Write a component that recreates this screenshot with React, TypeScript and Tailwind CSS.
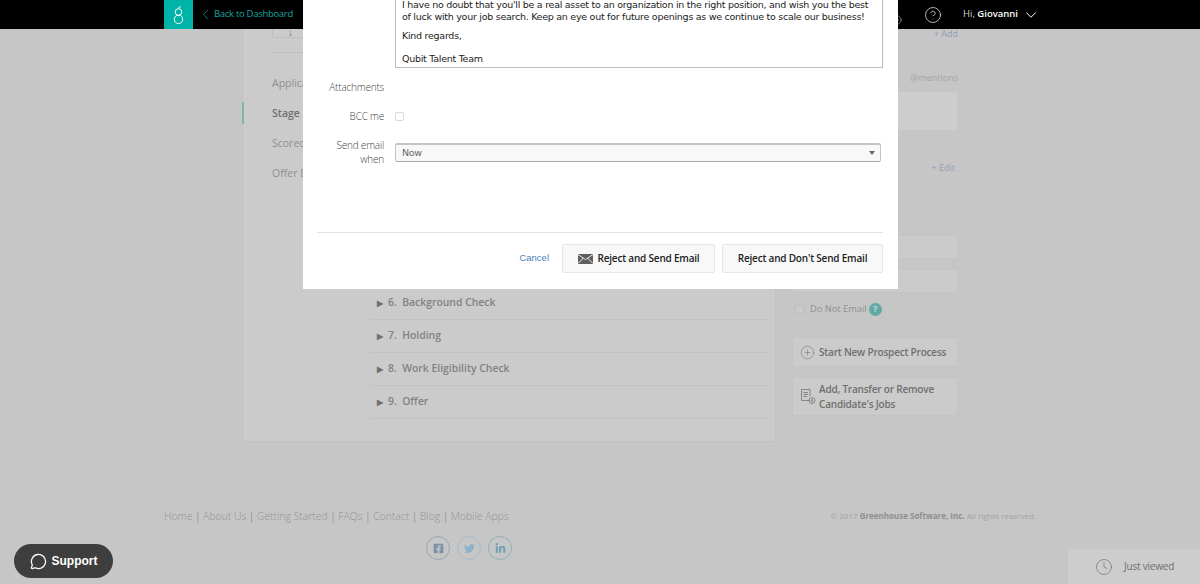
import { ChevronDown, ChevronLeft, CircleHelp, CirclePlus, Clock, MessageCircle } from "lucide-react";
import { FaFacebookSquare, FaLinkedinIn, FaTwitter } from "react-icons/fa";

const openSans = "font-['Open_Sans',sans-serif]";

const Logo = () => (
  <svg width="12" height="22" viewBox="0 0 12 22" fill="none" stroke="white" strokeWidth="1">
    <circle cx="5.5" cy="8" r="3.3" />
    <circle cx="5.5" cy="15.4" r="4.1" />
    <path d="M5.5 4.7 C5.5 3.4 6.3 2.8 7.8 2.8" />
  </svg>
);

const Envelope = () => (
  <svg width="15" height="10" viewBox="0 0 15 10">
    <rect width="15" height="10" fill="#5f5f5f" />
    <path d="M0 0.5 L7.5 5.5 L15 0.5 M0 9.5 L5.5 4 M15 9.5 L9.5 4" stroke="#f8f8f8" strokeWidth="0.9" fill="none" />
  </svg>
);

const JobsIcon = () => (
  <svg width="15" height="16" viewBox="0 0 15 16" fill="none" stroke="#757575" strokeWidth="0.8">
    <path d="M8.5 11.5 H0.5 V0.5 H9 V7" />
    <path d="M2.5 3.5 H7 M2.5 5.5 H7 M2.5 7.5 H6" />
    <circle cx="11" cy="11.5" r="3" />
    <circle cx="11" cy="11.5" r="1" />
  </svg>
);

const stages = ["6.  Background Check", "7.  Holding", "8.  Work Eligibility Check", "9.  Offer"];
const navItems = ["Application", "Stage", "Scorecards", "Offer Details"];
const footerLinks = ["Home", "About Us", "Getting Started", "FAQs", "Contact", "Blog", "Mobile Apps"];

const Header = () => (
  <header className="flex h-[29px] items-center bg-black pl-[164px] pr-[160px]">
    <div className="flex h-[29px] w-[29px] items-center justify-center bg-[#00b3a8]">
      <Logo />
    </div>
    <ChevronLeft className="ml-[4px] text-[#16a89e]" size={17} strokeWidth={1} />
    <span className="text-[9.5px] tracking-[-0.3px] text-[#14a79d]">Back to Dashboard</span>
    <div className="ml-auto flex items-center">
      <CirclePlus className="mt-[10px] text-[#d8d8d8]" size={10} strokeWidth={1.2} />
      <CircleHelp className="ml-[22px] text-[#e6e6e6]" size={18} strokeWidth={1} />
      <span className="ml-[21px] text-[9.5px] text-[#d8d8d8]">
        Hi, <span className="font-semibold text-white">Giovanni</span>
      </span>
      <ChevronDown className="ml-[4px] text-white" size={18} strokeWidth={1.3} />
    </div>
  </header>
);

const Card = () => (
  <section className="flex h-[413px] w-[534px] border-x border-b border-[#c2c2c2] bg-[#cbcbcb]">
    <div className="relative w-[127px] pl-[29px]">
      <div className="h-[9px] w-[60px] border-x border-b border-[#c0c0c0] pl-[15px] text-[10px] leading-[7px] text-[#777]">↓</div>
      <div className="mt-[14px] h-px w-[90px] bg-[#c0c0c0]" />
      <ul className="mt-[19px] flex flex-col gap-[8px] text-[10.5px] leading-[22px] text-[#8f8f8f]">
        {navItems.map((item) => (
          <li key={item} className={item === "Stage" ? "font-semibold text-[#6f6f6f]" : ""}>{item}</li>
        ))}
      </ul>
      <div className="absolute left-[-1px] top-[73px] h-[22px] w-[2px] bg-[#7fb5ae]" />
    </div>
    <ul className="mt-[258px] h-[132px] w-[398px] text-[10.4px] font-semibold text-[#828282]">
      {stages.map((stage) => (
        <li key={stage} className="flex h-[33px] items-center border-b border-[#c2c2c2] pl-[7px]">
          <span className="mr-[5px] text-[8px] text-[#6f6f6f]">▶</span>
          <span className="whitespace-pre">{stage}</span>
        </li>
      ))}
    </ul>
  </section>
);

const Sidebar = () => (
  <aside className="ml-[16px] flex w-[166px] flex-col text-[#9a9a9a]">
    <div className="mt-[-1px] h-[27px] border-b border-[#c2c2c2] text-right text-[9px] leading-[12px] text-[#8d9db5]">+ Add</div>
    <div className="mt-[16px] text-right text-[9px] leading-[14px] text-[#a4a4a4]">@mentions</div>
    <div className="mt-[7px] h-[38px] w-[165px] bg-[#cdcdcd]" />
    <div className="mt-[16px] h-[16px] border-t border-[#c2c2c2]" />
    <div className="pr-[3px] text-right text-[9px] leading-[12px] text-[#8d9db5]">+ Edit</div>
    <div className="mt-[21px] h-px bg-[#c2c2c2]" />
    <div className="mt-[39px] h-[24px] border border-[#c4c4c4] bg-[#cbcbcb]" />
    <div className="mt-[10px] h-[24px] border border-[#c4c4c4] bg-[#cbcbcb]" />
    <div className="flex h-[33px] items-center border-b border-[#c2c2c2] pl-[3px] text-[9.3px] text-[#8f8f8f]">
      <span className="h-[9px] w-[9px] rounded-[2px] border border-[#bbb] bg-[#cbcbcb]" />
      <span className="ml-[6px] whitespace-nowrap">Do Not Email</span>
      <span className="ml-[2px] flex h-[13px] w-[13px] items-center justify-center rounded-full bg-[#61a9a4] text-[9px] font-bold text-[#d5d5d5]">?</span>
    </div>
    <button className="mt-[11px] flex h-[30px] items-center border border-[#c4c4c4] bg-[#cbcbcb] pl-[7px] text-[10px] font-semibold tracking-[-0.2px] text-[#6f6f6f]">
      <CirclePlus className="text-[#757575]" size={15} strokeWidth={0.9} />
      <span className="ml-[4px] whitespace-nowrap">Start New Prospect Process</span>
    </button>
    <button className="mt-[10px] flex h-[39px] items-center border border-[#c4c4c4] bg-[#cbcbcb] pl-[8px] text-left text-[10px] font-semibold leading-[15px] tracking-[-0.2px] text-[#6f6f6f]">
      <JobsIcon />
      <span className="ml-[3px] whitespace-nowrap">Add, Transfer or Remove<br />Candidate's Jobs</span>
    </button>
  </aside>
);

const Footer = () => (
  <footer className="mt-[66px] px-[164px] text-[#a0a0a0]">
    <div className="flex items-center justify-between">
      <nav className="text-[10.4px] leading-[16px] font-light text-[#939393]">
        {footerLinks.map((link, i) => (
          <span key={link}>
            {i > 0 && <span className="mx-[2.5px] text-[#777]">|</span>}
            {link}
          </span>
        ))}
      </nav>
      <div className="text-[8px] leading-[16px] text-[#a3a3a3]">
        © 2017 <span className="font-bold text-[#8e8e8e]">Greenhouse Software, Inc.</span> All rights reserved.
      </div>
    </div>
    <div className="ml-[262px] mt-[12px] flex gap-[7px]">
      <span className="flex h-[24px] w-[24px] items-center justify-center rounded-full border border-[#9aa5b5] text-[#7f8fa9]"><FaFacebookSquare size={11} /></span>
      <span className="flex h-[24px] w-[24px] items-center justify-center rounded-full border border-[#a5bccb] text-[#8fb2cb]"><FaTwitter size={11} /></span>
      <span className="flex h-[24px] w-[24px] items-center justify-center rounded-full border border-[#8fb0b9] text-[#6f9fb2]"><FaLinkedinIn size={11} /></span>
    </div>
  </footer>
);

const Modal = () => (
  <div className="absolute left-[303px] top-0 h-[289px] w-[595px] bg-white pl-[14px] pr-[15px]">
    <div className="ml-[78px] h-[69px] w-[488px] border-x border-b border-[#bdbdbd] pl-[6px] font-['DejaVu_Sans',sans-serif] text-[9.5px] leading-[12px] tracking-[-0.27px] text-[#222]">
      <p className="-mt-px whitespace-nowrap">I have no doubt that you'll be a real asset to an organization in the right position, and wish you the best<br />of luck with your job search. Keep an eye out for future openings as we continue to scale our business!</p>
      <p className="mt-[7px]">Kind regards,</p>
      <p className="mt-[11px]">Qubit Talent Team</p>
    </div>
    <div className={`flex h-[38px] items-center ${openSans}`}>
      <span className="w-[67px] whitespace-nowrap text-right text-[10px] font-light tracking-[-0.2px] text-[#444]">Attachments</span>
    </div>
    <div className="flex h-[21px] items-center">
      <span className={`w-[67px] text-right text-[10px] font-light tracking-[-0.2px] text-[#444] ${openSans}`}>BCC me</span>
      <span className="ml-[11px] h-[9px] w-[9px] rounded-[2px] border border-[#d8d8d8] bg-white" />
    </div>
    <div className="mt-[11px] flex items-start">
      <span className={`w-[67px] text-right text-[10px] leading-[14px] font-light tracking-[-0.2px] text-[#444] ${openSans}`}>Send email when</span>
      <div className="ml-[11px] mt-[5px] flex h-[19px] w-[486px] items-center justify-between rounded-[2px] border border-t-2 border-[#c4c4c4] border-b-[#aaa] bg-[#f8f8f8] pl-[6px] pr-[5px] font-['DejaVu_Sans',sans-serif] text-[9.5px] tracking-[-0.3px] text-[#666]">
        Now
        <span className="h-0 w-0 border-x-[3px] border-t-[4px] border-x-transparent border-t-[#666]" />
      </div>
    </div>
    <div className="mt-[66px] h-px w-[566px] bg-[#e2e2e2]" />
    <div className="mt-[11px] flex items-center justify-end">
      <span className="mr-[13px] font-['Liberation_Sans',sans-serif] text-[9.5px] text-[#4a7fb8]">Cancel</span>
      <button className={`flex h-[29px] w-[153px] items-center justify-center gap-[5px] rounded-[2px] border border-[#e6e6e6] bg-[#f8f8f8] text-[10px] font-semibold tracking-[-0.2px] text-[#222] ${openSans}`}>
        <Envelope />
        Reject and Send Email
      </button>
      <button className={`ml-[7px] h-[29px] w-[161px] rounded-[2px] border border-[#e6e6e6] bg-[#f8f8f8] text-[10px] font-semibold tracking-[-0.2px] text-[#222] ${openSans}`}>
        Reject and Don't Send Email
      </button>
    </div>
  </div>
);

export default function App() {
  return (
    <div className={`relative h-[584px] overflow-hidden bg-[#c6c6c6] ${openSans}`}>
      <Header />
      <main className="flex pl-[242px]">
        <Card />
        <Sidebar />
      </main>
      <Footer />
      <Modal />
      <button className="absolute bottom-[6px] left-[14px] flex h-[34px] w-[99px] items-center justify-center gap-[5px] rounded-full bg-[#3e3e3e] font-['Liberation_Sans',sans-serif] text-[12px] font-bold text-white">
        <MessageCircle size={17} strokeWidth={1.8} />
        Support
      </button>
      <div className="absolute bottom-0 right-0 flex h-[35px] w-[132px] items-center bg-[#cdcdcd] pl-[27px] text-[10px] tracking-[-0.2px] text-[#6f6f6f]">
        <Clock size={18} strokeWidth={0.9} />
        <span className="ml-[11px]">Just viewed</span>
      </div>
    </div>
  );
}
